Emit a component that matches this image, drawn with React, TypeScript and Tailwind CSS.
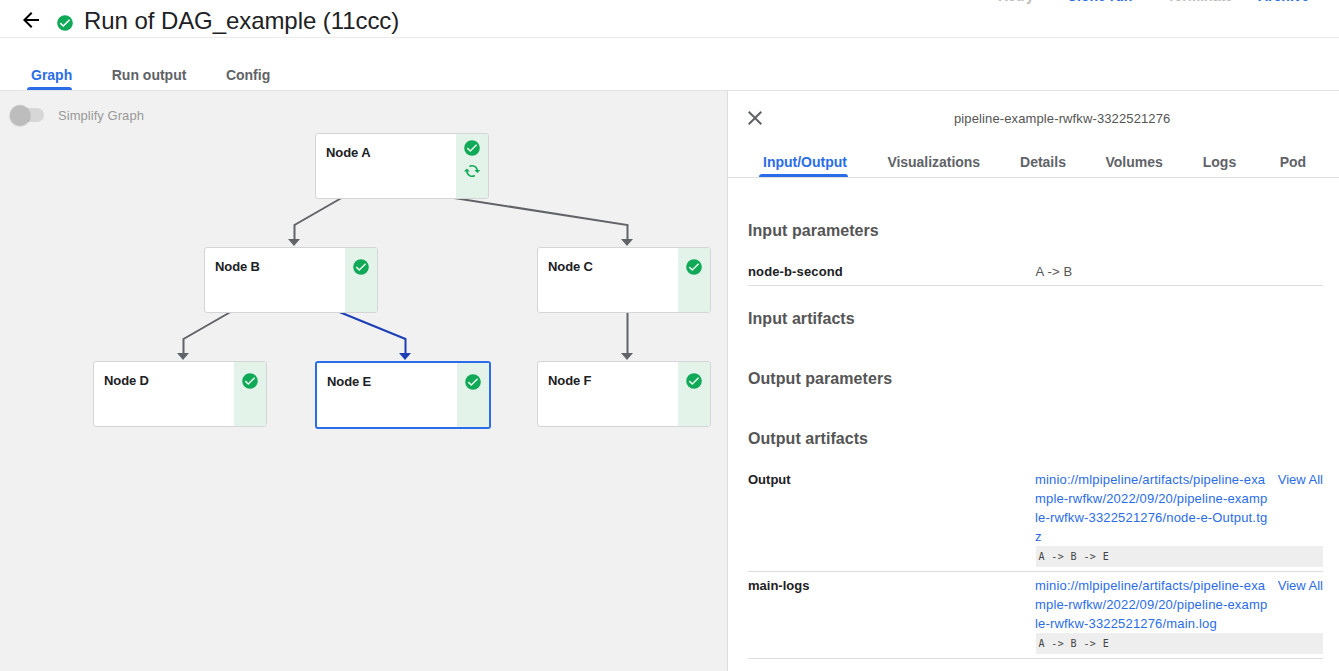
import type { ReactNode } from "react";

function CheckIcon({ className = "", tick = "#e6f4ea" }: { className?: string; tick?: string }) {
  return (
    <svg className={className} width="18" height="18" viewBox="0 0 18 18">
      <circle cx="9" cy="9" r="7.8" fill="#0fa958" />
      <path d="M4.300 9.100l3 2.900 6.300-6.200" fill="none" stroke={tick} strokeWidth="1.600" />
    </svg>
  );
}

function CachedIcon() {
  return (
    <svg width="18" height="18" viewBox="0 0 18 18" fill="#0fa958">
      <path d="M3.900 9a5.200 5.200 0 0 0 7.900 4.500M6.400 4.500A5.200 5.200 0 0 1 14.300 9" fill="none" stroke="#0fa958" strokeWidth="1.500" />
      <path d="M0.900 9.500L3.900 6.500l3 3zM11.300 8.100l3 3 3-3z" />
    </svg>
  );
}

const nodes = [
  { name: "Node A", pos: "left-[315px] top-[42px]", cached: true },
  { name: "Node B", pos: "left-[204px] top-[156px]" },
  { name: "Node C", pos: "left-[537px] top-[156px]" },
  { name: "Node D", pos: "left-[93px] top-[270px]" },
  { name: "Node E", pos: "left-[315px] top-[270px]", selected: true },
  { name: "Node F", pos: "left-[537px] top-[270px]" },
];

const edges = [
  { d: "M345 105L294.500 134V149", tip: "M288 148h12l-6 7z", active: false },
  { d: "M451 106.500L627.500 134V149", tip: "M621 148h12l-6 7z", active: false },
  { d: "M234 219L183.500 248V263", tip: "M177 262h12l-6 7z", active: false },
  { d: "M337 220L405.500 248V263", tip: "M399 262h12l-6 7z", active: true },
  { d: "M627.500 220V263", tip: "M621 262h12l-6 7z", active: false },
];

function Graph() {
  return (
    <section className="relative w-[727px] shrink-0 bg-[#f1f1f1]">
      <div className="flex items-center pl-[10px] pt-[15px]">
        <div className="relative -mt-[2px] h-[14px] w-[34px] rounded-full bg-[#d7d7d7]">
          <div className="absolute -top-[3px] left-0 size-5 rounded-full bg-[#bdbdbd] shadow-[0_1px_2px_rgba(0,0,0,0.3)]" />
        </div>
        <span className="ml-[14px] text-[13px] leading-5 tracking-[0.05px] text-[#999]">Simplify Graph</span>
      </div>
      <svg className="absolute left-0 top-0" width="727" height="400">
        {edges.map((e) => (
          <g key={e.d} className={e.active ? "text-[#1c3fb5]" : "text-[#606368]"}>
            <path d={e.d} fill="none" stroke="currentColor" strokeWidth="2" />
            <path d={e.tip} fill="currentColor" />
          </g>
        ))}
      </svg>
      {nodes.map((n) => (
        <div
          key={n.name}
          className={`absolute flex overflow-hidden rounded-[3px] bg-white ${n.pos} ${n.selected ? "h-[68px] w-[176px] border-2 border-[#2b6de8]" : "h-[66px] w-[174px] border border-[#d3d5d7]"}`}
        >
          <div className="grow pl-[10px] pt-[9px] text-[13px] font-bold leading-5 tracking-[-0.1px] text-[#202124]">{n.name}</div>
          <div className="flex w-8 flex-col items-center gap-[5px] bg-[#e4f3e9] pt-[5px]">
            <CheckIcon className={n.cached ? "" : "mt-[5px]"} />
            {n.cached && <CachedIcon />}
          </div>
        </div>
      ))}
    </section>
  );
}

function Tab({ children, active, className = "", bar = "" }: { children: string; active?: boolean; className?: string; bar?: string }) {
  return (
    <div className={`relative shrink-0 whitespace-nowrap text-sm font-bold leading-5 ${active ? "text-[#2b6de8]" : "text-[#5f6368]"} ${className}`}>
      {children}
      {active && <span className={`absolute -left-1 h-[3px] rounded-t-[3px] bg-[#2b6de8] ${bar}`} />}
    </div>
  );
}

function Heading({ children, className = "" }: { children: string; className?: string }) {
  return <h2 className={`text-base font-bold leading-5 tracking-[0.06px] text-[#555] ${className}`}>{children}</h2>;
}

function Artifact({ name, lines, className }: { name: string; lines: string[]; className: string }) {
  return (
    <div className={`flex border-b border-[#ddd] ${className}`}>
      <div className="w-[287.5px] shrink-0 text-[13px] font-bold leading-[19px] text-[#202124]">{name}</div>
      <div className="grow">
        <div className="flex justify-between text-[13px] leading-[19px] text-[#2b6de8]">
          <a className="-ml-[0.5px] whitespace-nowrap tracking-[0.17px]">
            {lines.map((l) => <span key={l} className="block">{l}</span>)}
          </a>
          <a className="whitespace-nowrap">View All</a>
        </div>
        <pre className="h-[21px] bg-[#eee] pl-[3px] font-['DejaVu_Sans_Mono',monospace] text-[10px] leading-[21px] tracking-[0.4px] text-[#444]">{"A -> B -> E"}</pre>
      </div>
    </div>
  );
}

function Action({ children, className }: { children: ReactNode; className: string }) {
  return <span className={`absolute -top-[14px] whitespace-nowrap text-sm font-bold leading-5 ${className}`}>{children}</span>;
}

export default function App() {
  return (
    <div className="flex h-[671px] w-[1339px] flex-col overflow-hidden bg-white font-['Liberation_Sans',Arial,sans-serif] text-[#202124]">
      <header className="relative flex h-[38px] shrink-0 border-b border-[#ebebeb]">
        <svg className="ml-[19px] mt-2 shrink-0" width="24" height="24" viewBox="0 0 24 24">
          <path d="M20 11H7.830l5.590-5.590L12 4l-8 8 8 8 1.410-1.410L7.830 13H20v-2z" />
        </svg>
        <CheckIcon className="ml-[13px] mt-[14px] shrink-0" tick="#fff" />
        <h1 className="ml-[10px] whitespace-nowrap text-[24px] leading-[41px] tracking-[-0.07px]">Run of DAG_example (11ccc)</h1>
        <Action className="left-[998px] text-[#bbb]">Retry</Action>
        <Action className="left-[1067px] text-[#2b6de8]">Clone run</Action>
        <Action className="left-[1167px] text-[#bbb]">Terminate</Action>
        <Action className="left-[1258px] text-[#2b6de8]">Archive</Action>
      </header>
      <nav className="flex h-[53px] shrink-0 gap-[39.5px] border-b border-[#e3e3e3] pl-[31px] pt-[27px]">
        <Tab active bar="top-[22px] w-[45px]">Graph</Tab>
        <Tab>Run output</Tab>
        <Tab>Config</Tab>
      </nav>
      <div className="flex min-h-0 grow">
        <Graph />
        <aside className="w-[612px] border-l border-[#ddd] bg-white">
          <div className="flex h-[61px] items-start">
            <svg className="ml-[15px] mt-[15px]" width="24" height="24" viewBox="0 0 24 24" fill="#5f6368">
              <path d="M19 6.410L17.590 5 12 10.590 6.410 5 5 6.410 10.590 12 5 17.590 6.410 19 12 13.410 17.590 19 19 17.590 13.410 12z" />
            </svg>
            <div className="ml-[187px] mt-[18px] whitespace-nowrap text-[13px] leading-5 tracking-[0.12px] text-[#555]">pipeline-example-rwfkw-3322521276</div>
          </div>
          <nav className="flex h-[26px] gap-10 border-b border-[#e0e0e0] pl-[35px]">
            <Tab active bar="top-[22px] w-[89px]">Input/Output</Tab>
            <Tab className="ml-[0.5px] tracking-[-0.04px]">Visualizations</Tab>
            <Tab>Details</Tab>
            <Tab className="-ml-[0.5px]">Volumes</Tab>
            <Tab>Logs</Tab>
            <Tab className="ml-[3.5px]">Pod</Tab>
          </nav>
          <div className="pl-5 pr-4 pt-[43px]">
            <Heading>Input parameters</Heading>
            <div className="mt-[21px] flex h-6 border-b border-[#ddd] text-[13px] leading-5">
              <span className="w-[287.5px] font-bold tracking-[0.13px]">node-b-second</span>
              <span className="tracking-[0.2px] text-[#555]">A -&gt; B</span>
            </div>
            <Heading className="mt-[23px]">Input artifacts</Heading>
            <Heading className="mt-10">Output parameters</Heading>
            <Heading className="mt-10">Output artifacts</Heading>
            <Artifact className="mt-[21px] h-[102px]" name="Output" lines={["minio://mlpipeline/artifacts/pipeline-exa", "mple-rwfkw/2022/09/20/pipeline-examp", "le-rwfkw-3322521276/node-e-Output.tg", "z"]} />
            <Artifact className="h-[87px] pt-[4px]" name="main-logs" lines={["minio://mlpipeline/artifacts/pipeline-exa", "mple-rwfkw/2022/09/20/pipeline-examp", "le-rwfkw-3322521276/main.log"]} />
          </div>
        </aside>
      </div>
    </div>
  );
}
